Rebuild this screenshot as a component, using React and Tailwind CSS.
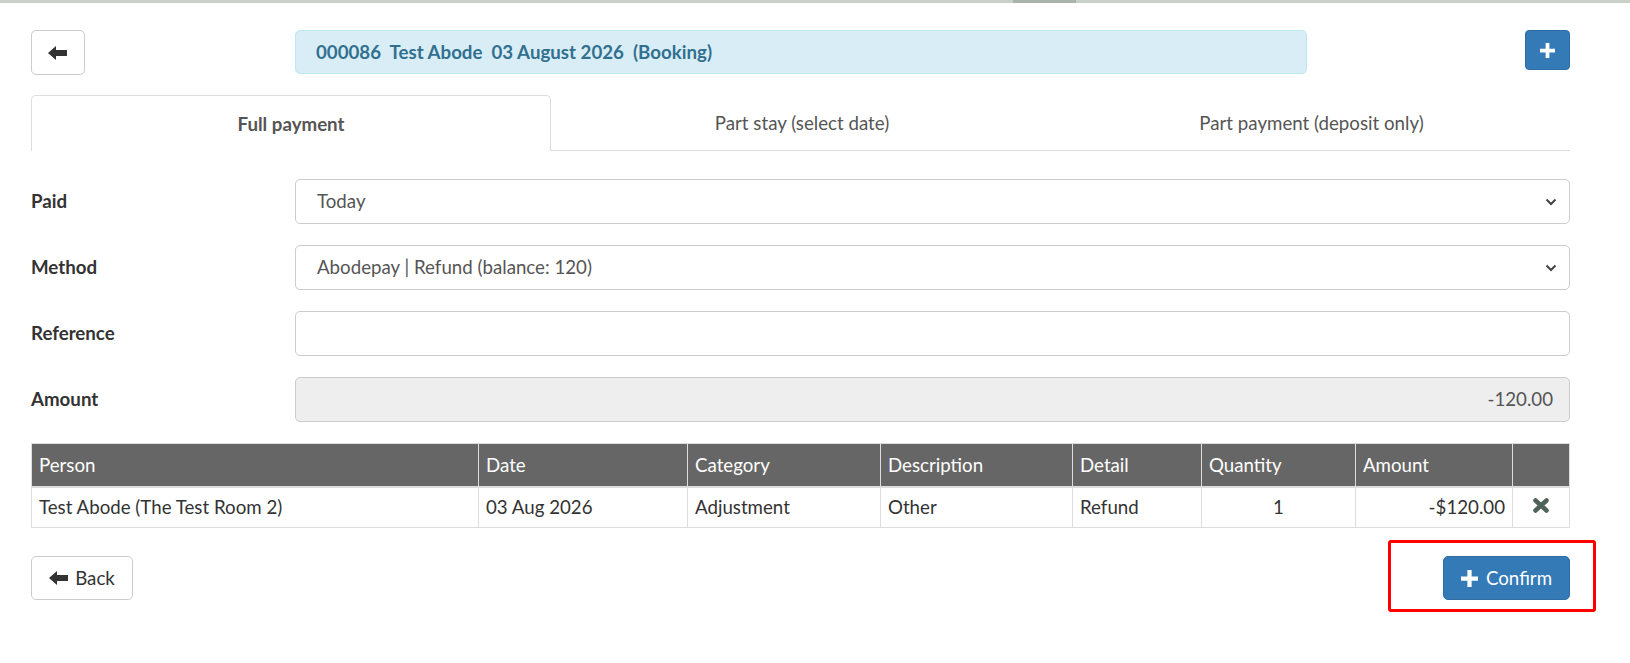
import React from "react";

const ArrowLeft = ({ className = "" }) => (
  <svg className={className} width="20" height="14" viewBox="0 0 20 14">
    <path d="M0 7 L8 0 L8 4 L19 4 L19 10 L8 10 L8 14 Z" fill="#333" />
  </svg>
);

const Plus = ({ size = 16, className = "" }) => (
  <svg className={className} width={size} height={size} viewBox="0 0 16 16">
    <path d="M6 0 H10 V6 H16 V10 H10 V16 H6 V10 H0 V6 H6 Z" fill="#fff" />
  </svg>
);

const Chevron = () => (
  <svg width="12" height="8" viewBox="0 0 12 8">
    <path d="M1.5 1.5 L6 6 L10.5 1.5" fill="none" stroke="#444" strokeWidth="2" />
  </svg>
);

const Remove = () => (
  <svg width="18" height="17" viewBox="0 0 18 17">
    <path d="M3.5 3.5 L14.5 13.5 M14.5 3.5 L3.5 13.5" fill="none" stroke="#4e6259" strokeWidth="4.5" strokeLinecap="round" />
  </svg>
);

function SelectBox({ value }) {
  return (
    <div className="flex-1 h-[45px] border border-[#ccc] rounded-[5px] bg-white flex items-center justify-between pl-[21px] pr-[12px] text-[#555]">
      <span>{value}</span>
      <Chevron />
    </div>
  );
}

function Row({ label, children }) {
  return (
    <div className="flex items-center h-[45px]">
      <div className="w-[264px] font-bold text-[#333]">{label}</div>
      {children}
    </div>
  );
}

const cols = [
  { h: "Person", w: "w-[447px]", v: "Test Abode (The Test Room 2)" },
  { h: "Date", w: "w-[209px]", v: "03 Aug 2026" },
  { h: "Category", w: "w-[193px]", v: "Adjustment" },
  { h: "Description", w: "w-[192px]", v: "Other" },
  { h: "Detail", w: "w-[129px]", v: "Refund" },
  { h: "Quantity", w: "w-[154px]", v: "1", c: "text-center" },
  { h: "Amount", w: "w-[157px]", v: "-$120.00", c: "text-right" },
];

export default function App() {
  return (
    <div
      className="w-[1630px] h-[663px] bg-white text-[18.7px] text-[#333] relative overflow-hidden"
      style={{ fontFamily: "Lato, 'Open Sans', sans-serif" }}
    >
      <div className="h-[3px] bg-[#c8d0c8] flex">
        <div className="ml-[1013px] w-[63px] bg-[#a9b3a9]" />
      </div>
      <div className="pl-[31px] pr-[60px] pt-[27px]">
        {/* top row */}
        <div className="flex items-start">
          <button className="w-[54px] h-[45px] border border-[#ccc] rounded-[5px] flex items-center justify-center bg-white">
            <ArrowLeft />
          </button>
          <div className="ml-[210px] w-[1012px] h-[44px] bg-[#d9edf7] border border-[#bce8f1] rounded-[5px] flex items-center pl-[20px] font-bold text-[#31708f] whitespace-pre">
            {"000086  Test Abode  03 August 2026  (Booking)"}
          </div>
          <button className="ml-auto w-[45px] h-[40px] bg-[#337ab7] border border-[#2e6da4] rounded-[4px] flex items-center justify-center">
            <Plus size={15} />
          </button>
        </div>

        {/* tabs */}
        <div className="mt-[20px] flex h-[56px]">
          <div className="w-[520px] border border-[#ddd] border-b-0 rounded-t-[5px] flex items-center justify-center pt-[2px] font-bold text-[#555]">
            Full payment
          </div>
          <div className="w-[502px] border-b border-[#ddd] flex items-center justify-center pt-[2px] text-[#555]">
            Part stay (select date)
          </div>
          <div className="flex-1 border-b border-[#ddd] flex items-center justify-center pt-[2px] text-[#555]">
            Part payment (deposit only)
          </div>
        </div>

        {/* form */}
        <div className="mt-[28px] flex flex-col gap-[21px]">
          <Row label="Paid">
            <SelectBox value="Today" />
          </Row>
          <Row label="Method">
            <SelectBox value="Abodepay | Refund (balance: 120)" />
          </Row>
          <Row label="Reference">
            <div className="flex-1 h-[45px] border border-[#ccc] rounded-[5px] bg-white" />
          </Row>
          <Row label="Amount">
            <div className="flex-1 h-[45px] border border-[#ccc] rounded-[5px] bg-[#eee] flex items-center justify-end pr-[16px] text-[#555]">
              -120.00
            </div>
          </Row>
        </div>

        {/* table */}
        <table className="mt-[21px] w-[1539px] border-collapse border border-[#ddd]">
          <thead>
            <tr className="bg-[#666] text-white h-[43px]">
              {cols.map((c) => (
                <th key={c.h} className={`${c.w} border-x border-[#ddd] px-[7px] text-left font-normal border-b-2`}>
                  {c.h}
                </th>
              ))}
              <th className="border-x border-b-2 border-[#ddd]" />
            </tr>
          </thead>
          <tbody>
            <tr className="h-[41px]">
              {cols.map((c) => (
                <td key={c.h} className={`border border-[#ddd] px-[7px] ${c.c || ""}`}>
                  {c.v}
                </td>
              ))}
              <td className="border border-[#ddd] text-center">
                <span className="inline-flex items-center justify-center pt-[2px]">
                  <Remove />
                </span>
              </td>
            </tr>
          </tbody>
        </table>

        {/* bottom buttons */}
        <div className="mt-[28px] flex items-center justify-between">
          <button className="w-[102px] h-[44px] border border-[#ccc] rounded-[5px] bg-white flex items-center justify-center gap-[6px] text-[#333]">
            <ArrowLeft />
            <span>Back</span>
          </button>
          <div className="relative">
            <button className="w-[127px] h-[44px] bg-[#337ab7] border border-[#2e6da4] rounded-[5px] flex items-center justify-center gap-[8px] text-white">
              <Plus size={17} />
              <span>Confirm</span>
            </button>
            <div className="absolute left-[-55px] top-[-16px] right-[-26px] bottom-[-12px] border-[3px] border-[#ff0000] rounded-[3px]" />
          </div>
        </div>
      </div>
    </div>
  );
}
